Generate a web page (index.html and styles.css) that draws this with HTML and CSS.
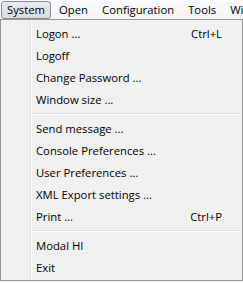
FILE: index.html
```html
<!DOCTYPE html>
<html>
<head>
<meta charset="utf-8">
<link rel="stylesheet" href="styles.css">
</head>
<body>
<div class="menubar">
  <span class="top-item active">System</span>
  <span class="top-item">Open</span>
  <span class="top-item">Configuration</span>
  <span class="top-item">Tools</span>
  <span class="top-item">Window</span>
</div>
<div class="dropdown">
  <div class="item"><span class="label">Logon ...</span><span class="key">Ctrl+L</span></div>
  <div class="item"><span class="label">Logoff</span></div>
  <div class="item"><span class="label">Change Password ...</span></div>
  <div class="item"><span class="label">Window size ...</span></div>
  <div class="sep"></div>
  <div class="item"><span class="label">Send message ...</span></div>
  <div class="item"><span class="label">Console Preferences ...</span></div>
  <div class="item"><span class="label">User Preferences ...</span></div>
  <div class="item"><span class="label">XML Export settings ...</span></div>
  <div class="item"><span class="label">Print ...</span><span class="key">Ctrl+P</span></div>
  <div class="sep"></div>
  <div class="item"><span class="label">Modal HI</span></div>
  <div class="item"><span class="label">Exit</span></div>
</div>
</body>
</html>
```
FILE: styles.css
```css
html, body {
  margin: 0;
  padding: 0;
}
body {
  width: 243px;
  height: 283px;
  overflow: hidden;
  background: #f7f7f7;
  font-family: "Open Sans", "Liberation Sans", Arial, sans-serif;
  font-size: 11.3px;
  color: #000;
}
.menubar {
  display: flex;
  height: 19px;
  padding-left: 1px;
  gap: 2px;
  background: linear-gradient(#fbfcfd, #f1f3f6);
  white-space: nowrap;
  overflow: hidden;
}
.top-item {
  box-sizing: border-box;
  height: 18px;
  margin-top: 1px;
  padding: 0 5px;
  line-height: 16px;
  border: 1px solid transparent;
  border-radius: 3px;
}
.top-item.active {
  border-color: #8a8c8f;
  background: linear-gradient(#e6e9ed, #d9dde3);
}
.dropdown {
  box-sizing: border-box;
  width: 243px;
  height: 262px;
  border: 1px solid #979797;
  background: #f0f0f0 linear-gradient(to right, transparent 29px, #e2e3e3 29px, #e2e3e3 30px, #ffffff 30px, #ffffff 31px, transparent 31px);
  padding: 2px;
}
.item {
  display: flex;
  height: 22px;
  align-items: center;
  padding-left: 33px;
  padding-right: 18px;
}
.label {
  flex: 1;
}
.key {
  flex: none;
}
.sep {
  height: 7px;
  margin-left: 29px;
  background: linear-gradient(transparent 3px, #e0e0e0 3px, #e0e0e0 4px, #ffffff 4px, #ffffff 5px, transparent 5px);
}
```
